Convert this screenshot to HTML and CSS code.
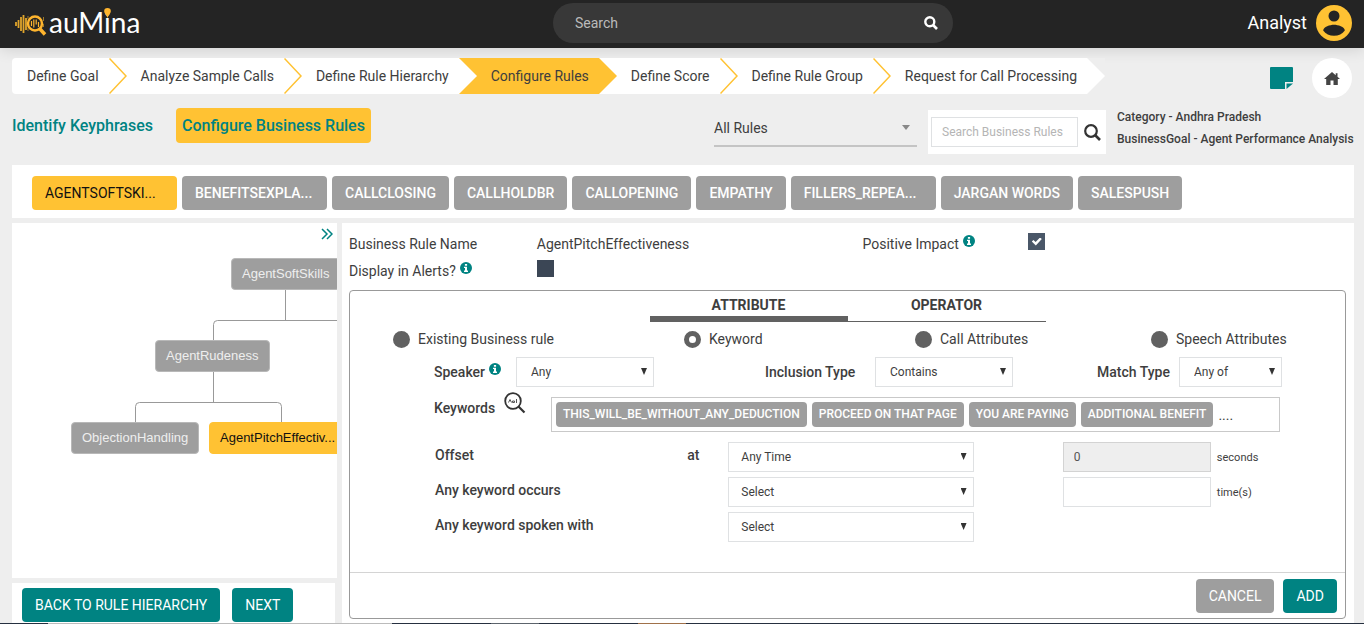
FILE: index.html
```
<!DOCTYPE html>
<html lang="en">
<head>
<meta charset="utf-8">
<title>auMina - Configure Business Rules</title>
<meta name="viewport" content="width=device-width, initial-scale=1">
<link rel="stylesheet" href="styles.css">
</head>
<body>
<svg class="sprite" aria-hidden="true">
  <symbol id="info" viewBox="0 0 12 12"><circle cx="6" cy="6" r="6"/><path d="M4.9 1.9h2.2v1.8H4.9zM4 4.7h3v3.9h1V10H4V8.600h1V6.100H4z" fill="#fff"/></symbol>
  <symbol id="chevron" viewBox="0 0 18 36"><path d="M0.500 0.500 17 18 0.500 35.500" fill="none" stroke="#ffc233" stroke-width="1.500"/></symbol>
</svg>

<header class="topbar">
  <a class="logo" href="#">
    <svg class="logo-mark" viewBox="0 0 32 26" aria-hidden="true">
      <path d="M1 11v4M3.500 9v8M6 6v14M8.500 4v18M11 7v12" stroke="#e0a52c" stroke-width="1.800" fill="none"/>
      <circle cx="20" cy="12.500" r="7" fill="none" stroke="#ffb52e" stroke-width="2.500"/>
      <path d="M25 18l5 5.500" stroke="#ffb52e" stroke-width="3.500"/>
      <path d="M16.500 10v5M18.800 8.500v8M21.200 8.500v5M23.500 11v5" stroke="#ffb52e" stroke-width="1.200"/>
      <path d="M13 5v3M28.500 6v4M28.500 13v3M13 17v3" stroke="#a07a2a" stroke-width="1"/>
    </svg>
    <span class="logo-text">auM<span class="logo-i">i<svg class="logo-dot" viewBox="0 0 6 9" aria-hidden="true"><path d="M3 0a3 3 0 0 1 3 3c0 2-2 3-3 6C2 6 0 5 0 3a3 3 0 0 1 3-3z" fill="#ffb52e"/></svg></span>na</span>
  </a>
  <form class="search" role="search">
    <input class="search-input" type="search" placeholder="Search" aria-label="Search">
    <button class="icon-button" type="button" aria-label="Search">
      <svg width="14" height="14" viewBox="0 0 14 14"><circle cx="5.800" cy="5.800" r="4.500" fill="none" stroke="#fff" stroke-width="2.400"/><path d="M9 9l4 4" stroke="#fff" stroke-width="2.600"/></svg>
    </button>
  </form>
  <a class="user" href="#">
    <span>Analyst</span>
    <svg width="36" height="36" viewBox="0 0 36 36" aria-hidden="true"><circle cx="18" cy="18" r="18" fill="#ffc233"/><circle cx="18" cy="11" r="5.500" fill="#242424"/><path d="M7.200 25.500c0-3.600 7-5.700 10.800-5.700s10.800 2.100 10.800 5.700c-2.300 3.400-6.300 5.300-10.800 5.300S9.500 28.900 7.200 25.500z" fill="#242424"/></svg>
  </a>
</header>

<main class="page">
  <div class="steps-row">
    <ol class="steps">
      <li class="step"><a href="#">Define Goal</a><svg class="edge"><use href="#chevron"/></svg></li>
      <li class="step"><a href="#">Analyze Sample Calls</a><svg class="edge"><use href="#chevron"/></svg></li>
      <li class="step"><a href="#">Define Rule Hierarchy</a><svg class="edge"><path d="M0 0h18v36H0L18 18z" fill="#ffc233"/></svg></li>
      <li class="step current"><a href="#" aria-current="step">Configure Rules</a><svg class="edge"><path d="M0 0h18v36H0z" fill="#fff"/><path d="M0 0 18 18 0 36z" fill="#ffc233"/></svg></li>
      <li class="step"><a href="#">Define Score</a><svg class="edge"><use href="#chevron"/></svg></li>
      <li class="step"><a href="#">Define Rule Group</a><svg class="edge"><use href="#chevron"/></svg></li>
      <li class="step"><a href="#">Request for Call Processing</a><svg class="edge last"><path d="M0 0 18 18 0 36z" fill="#fff"/></svg></li>
    </ol>
    <div class="shortcuts">
      <button class="icon-button" type="button" aria-label="Notes"><svg width="23" height="22" viewBox="0 0 23 22"><path d="M1 0h21a1 1 0 0 1 1 1v14h-8v7H1a1 1 0 0 1-1-1V1a1 1 0 0 1 1-1z" fill="#008382"/><path d="M16.500 16.500H23L16.500 22z" fill="#008382"/></svg></button>
      <a class="home" href="#" aria-label="Home"><svg width="16" height="13" viewBox="0 0 16 13"><path d="M8 0 0 7h2.200v6H6.500V8.500h3V13h4.300V7H16l-2.500-2.200V1.200h-1.800v2z" fill="#444"/></svg></a>
    </div>
  </div>

  <div class="toolbar">
    <nav class="views">
      <a class="view" href="#">Identify Keyphrases</a>
      <a class="view active" href="#">Configure Business Rules</a>
    </nav>
    <div class="select line-select"><select aria-label="Rule filter"><option>All Rules</option></select></div>
    <form class="rule-search">
      <input type="text" placeholder="Search Business Rules" aria-label="Search Business Rules">
      <button class="icon-button" type="button" aria-label="Search rules"><svg width="17" height="17" viewBox="0 0 17 17"><circle cx="7" cy="7" r="5.800" fill="none" stroke="#333" stroke-width="2.200"/><path d="M11 11l5 5" stroke="#333" stroke-width="2.600"/></svg></button>
    </form>
    <div class="context"><div>Category - Andhra Pradesh</div><div>BusinessGoal - Agent Performance Analysis</div></div>
  </div>

  <nav class="categories" aria-label="Categories">
    <button class="btn long selected" type="button">AGENTSOFTSKI...</button>
    <button class="btn long" type="button">BENEFITSEXPLA...</button>
    <button class="btn" type="button">CALLCLOSING</button>
    <button class="btn" type="button">CALLHOLDBR</button>
    <button class="btn" type="button">CALLOPENING</button>
    <button class="btn" type="button">EMPATHY</button>
    <button class="btn long" type="button">FILLERS_REPEA...</button>
    <button class="btn" type="button">JARGAN WORDS</button>
    <button class="btn" type="button">SALESPUSH</button>
  </nav>

  <div class="workspace">
    <div class="side">
      <section class="tree" aria-label="Rule hierarchy">
        <svg class="links" width="325" height="240" viewBox="0 0 325 240" aria-hidden="true"><path d="M273.500 66v31.500M325 97.500H205.500q-4 0-4 4V118M201.500 148v31.500M123.500 200v-16.500q0-4 4-4h138q4 0 4 4V200" fill="none" stroke="#999"/></svg>
        <button class="expand icon-button" type="button" aria-label="Expand"><svg width="12" height="12" viewBox="0 0 12 12"><path d="M1 1l5 5-5 5M6 1l5 5-5 5" fill="none" stroke="#008382" stroke-width="1.500"/></svg></button>
        <button class="node node-root" type="button">AgentSoftSkills</button>
        <button class="node node-rude" type="button">AgentRudeness</button>
        <button class="node node-objection" type="button">ObjectionHandling</button>
        <button class="node node-pitch" type="button">AgentPitchEffectiv...</button>
      </section>
      <div class="side-actions">
        <button class="btn primary" type="button">BACK TO RULE HIERARCHY</button>
        <button class="btn primary" type="button">NEXT</button>
      </div>
    </div>

    <section class="editor">
      <div class="summary">
        <span>Business Rule Name</span><span>AgentPitchEffectiveness</span>
        <label for="positive">Positive Impact <svg class="info"><use href="#info"/></svg></label>
        <input class="check" id="positive" type="checkbox" checked>
        <label for="alerts">Display in Alerts? <svg class="info"><use href="#info"/></svg></label>
        <input class="check" id="alerts" type="checkbox">
      </div>

      <form class="rule">
        <div class="tabs" role="tablist">
          <button class="tab active" type="button" role="tab" aria-selected="true">ATTRIBUTE</button>
          <button class="tab" type="button" role="tab" aria-selected="false">OPERATOR</button>
        </div>
        <div class="kinds">
          <label><input class="radio" type="radio" name="kind">Existing Business rule</label>
          <label><input class="radio" type="radio" name="kind" checked>Keyword</label>
          <label><input class="radio" type="radio" name="kind">Call Attributes</label>
          <label><input class="radio" type="radio" name="kind">Speech Attributes</label>
        </div>
        <div class="fields">
          <div class="field speaker"><label for="speaker">Speaker <svg class="info"><use href="#info"/></svg></label><div class="select"><select id="speaker"><option>Any</option></select></div></div>
          <div class="field inclusion"><label for="inclusion">Inclusion Type</label><div class="select"><select id="inclusion"><option>Contains</option></select></div></div>
          <div class="field match"><label for="match">Match Type</label><div class="select"><select id="match"><option>Any of</option></select></div></div>
        </div>
        <div class="keywords">
          <div class="keywords-label">Keywords
            <button class="icon-button" type="button" aria-label="Find keywords"><svg width="22" height="22" viewBox="0 0 22 22"><circle cx="9" cy="9" r="7.800" fill="none" stroke="#333" stroke-width="1.800"/><path d="M14.500 14.500l6 6" stroke="#333" stroke-width="2.200"/><path d="M4.500 10.500 6 7.500l1.500 3M8.500 9h2v1.500h-2zM12.500 7v4" fill="none" stroke="#555" stroke-width="1"/></svg></button>
          </div>
          <div class="chips">
            <span class="chip">THIS_WILL_BE_WITHOUT_ANY_DEDUCTION</span>
            <span class="chip">PROCEED ON THAT PAGE</span>
            <span class="chip">YOU ARE PAYING</span>
            <span class="chip">ADDITIONAL BENEFIT</span>
            <span class="more">....</span>
          </div>
        </div>
        <div class="conditions">
          <label class="name" for="offset">Offset</label><span class="at">at</span>
          <div class="select"><select id="offset"><option>Any Time</option></select></div>
          <input class="amount" id="seconds" type="text" value="0" disabled><label class="unit" for="seconds">seconds</label>
          <label class="name" for="occurs">Any keyword occurs</label>
          <div class="select"><select id="occurs"><option>Select</option></select></div>
          <input class="amount" id="times" type="text"><label class="unit" for="times">time(s)</label>
          <label class="name" for="spoken">Any keyword spoken with</label>
          <div class="select"><select id="spoken"><option>Select</option></select></div>
        </div>
        <div class="rule-actions">
          <button class="btn" type="button">CANCEL</button>
          <button class="btn primary" type="button">ADD</button>
        </div>
      </form>
    </section>
  </div>
</main>
<div class="baseline"></div>
</body>
</html>
```
FILE: styles.css
```
* { box-sizing: border-box; }

body {
  margin: 0;
  min-height: 100vh;
  display: flex;
  flex-direction: column;
  background: #eee;
  color: #3e3e3e;
  font: 14px/20px Roboto, "Liberation Sans", sans-serif;
}

button, input, select { font: inherit; color: inherit; }
button { cursor: pointer; }
a { color: inherit; text-decoration: none; }
svg { display: block; }
.sprite { position: absolute; width: 0; height: 0; }

.icon-button {
  display: flex;
  padding: 0;
  border: 0;
  background: none;
}

/* Top bar */
.topbar {
  display: grid;
  grid-template-columns: 553fr 400px 411fr;
  align-items: start;
  height: 48px;
  background: #242424;
  color: #fff;
  box-shadow: 0 2px 14px rgba(0, 0, 0, 0.12);
}
.logo { display: flex; align-items: center; padding: 4px 0 0 15px; }
.logo-mark { width: 32px; height: 26px; margin-top: 4px; }
.logo-text { margin-left: 2px; font: 28px/36px Lato, sans-serif; }
.logo-i { position: relative; }
.logo-dot { position: absolute; left: 0; top: 3px; width: 7px; height: 10px; }
.search {
  display: flex;
  align-items: center;
  height: 40px;
  margin-top: 3px;
  padding: 0 15px 0 22px;
  border-radius: 20px;
  background: #383838;
}
.search-input {
  flex: 1;
  padding: 0;
  border: 0;
  outline: 0;
  background: none;
}
.search-input::placeholder { color: #bbb; }
.user {
  display: flex;
  justify-content: flex-end;
  align-items: center;
  gap: 9px;
  padding: 5px 12px 0 0;
  font-size: 18px;
}

/* Page frame */
.page {
  flex: 1;
  display: flex;
  flex-direction: column;
  padding: 10px 10px 0 12px;
}
.steps-row { display: flex; justify-content: space-between; align-items: flex-start; }
.steps { display: flex; margin: 0; padding: 0; list-style: none; }
.step { display: flex; height: 36px; background: #fff; line-height: 36px; }
.step a { padding: 0 10px 0 14px; white-space: nowrap; }
.step:first-child { padding-left: 1px; border-radius: 4px 0 0 4px; }
.step.current { background: #ffc233; }
.edge { width: 18px; height: 36px; }
.last { background: #eee; }
.shortcuts { display: flex; align-items: center; gap: 19px; padding-right: 2px; }
.home {
  display: flex;
  align-items: center;
  justify-content: center;
  width: 40px;
  height: 40px;
  border-radius: 50%;
  background: #fff;
}

/* Toolbar */
.toolbar { display: flex; align-items: flex-start; margin-top: 10px; }
.views { flex: 1; display: flex; gap: 18px; }
.view {
  padding: 0 5px 0 0;
  border-radius: 4px;
  color: #008382;
  font-size: 16px;
  font-weight: 500;
  line-height: 35px;
}
.view.active { padding: 0 6px; background: #ffc233; }

.select { position: relative; min-width: 0; }
.select select {
  appearance: none;
  display: block;
  width: 100%;
  height: 30px;
  padding: 0 20px 0 12px;
  border: 1px solid #dfe1e3;
  border-radius: 0;
  background: #fff;
  font-size: 12px;
}
.select::after {
  content: "";
  position: absolute;
  right: 7px;
  top: 11px;
  width: 6px;
  height: 7px;
  background: #333;
  clip-path: polygon(0 0, 100% 0, 50% 100%);
  pointer-events: none;
}
.line-select { width: 203px; margin-top: 2px; }
.line-select select {
  height: 37px;
  padding-left: 0;
  border: 0;
  border-bottom: 2px solid #c4c4c4;
  background: none;
  font-size: 14px;
}
.line-select::after { top: 15px; width: 8px; height: 5px; background: #888; }

.rule-search {
  display: flex;
  align-items: center;
  gap: 6px;
  height: 44px;
  margin: 2px 11px 0;
  padding: 0 5px 0 3px;
  background: #fff;
}
.rule-search input {
  width: 147px;
  height: 30px;
  padding: 0 0 0 10px;
  border: 1px solid #dfe1e3;
  font-size: 12px;
}
.rule-search input::placeholder { color: #b5b5b5; }
.context { width: 237px; font-size: 12px; font-weight: 500; line-height: 22px; white-space: nowrap; margin-top: -2px; }

/* Buttons */
.btn {
  height: 34px;
  padding: 0 13px;
  border: 0;
  border-radius: 4px;
  background: #9e9e9e;
  color: #fff;
  white-space: nowrap;
}
.btn.long { width: 145px; text-align: left; }
.btn.primary { background: #008382; }

.categories {
  display: flex;
  gap: 5px;
  margin-top: 11px;
  padding: 11px 20px 8px;
  background: #fff;
}
.categories .btn { font-weight: 500; }
.categories .selected { background: #ffc233; color: #111; font-weight: 400; }

/* Workspace */
.workspace {
  flex: 1;
  display: grid;
  grid-template-columns: 325px minmax(0, 1fr);
  gap: 5px;
  margin-top: 5px;
}
.side { display: flex; flex-direction: column; gap: 5px; }
.tree { position: relative; flex: 1; overflow: hidden; background: #fff; }
.links { position: absolute; left: 0; top: 0; }
.expand { position: absolute; left: 309px; top: 5px; }
.node {
  position: absolute;
  height: 32px;
  padding: 0 10px;
  border: 1px solid #b8b8b8;
  border-radius: 4px;
  background: #9e9e9e;
  color: #eee;
  font: 13px/20px "Liberation Sans", sans-serif;
  white-space: nowrap;
}
.node-root { left: 219px; top: 35px; }
.node-rude { left: 143px; top: 117px; }
.node-objection { left: 59px; top: 199px; }
.node-pitch { left: 197px; top: 199px; border-color: #ffc233; background: #ffc233; color: #111; }
.side-actions {
  display: flex;
  gap: 12px;
  margin-right: 2px;
  padding: 5px 10px 1px;
  background: #fff;
}

.editor {
  display: flex;
  flex-direction: column;
  padding: 7px 8px 4px 7px;
  background: #fff;
}
.summary {
  display: grid;
  grid-template-columns: 188fr 326fr 166fr 318fr;
  align-items: center;
  grid-auto-rows: 27px;
  padding-bottom: 6px;
}
.info { display: inline-block; width: 12px; height: 12px; margin-left: 1px; fill: #008382; vertical-align: 2px; }
.check {
  appearance: none;
  width: 17px;
  height: 17px;
  margin: 0 0 4px;
  background: #3b4655;
}
.check:checked {
  background: #4a5768;
  display: grid;
  place-items: center;
}
.check:checked::before {
  content: "";
  width: 10px;
  height: 8px;
  background: #fff;
  clip-path: polygon(0 50%, 16% 30%, 38% 56%, 82% 0, 100% 20%, 40% 100%);
}

.rule {
  flex: 1;
  display: flex;
  flex-direction: column;
  border: 1px solid #999;
  border-radius: 4px;
}
.tabs { display: grid; grid-template-columns: 1fr 1fr; width: 396px; margin: 0 auto; }
.tab {
  display: flex;
  justify-content: center;
  align-items: flex-start;
  height: 31px;
  padding: 0;
  border: 0;
  border-bottom: 1px solid #616161;
  background: none;
  font-weight: 700;
  line-height: 28px;
}
.tab.active { border-bottom-width: 6px; }

.kinds {
  display: grid;
  grid-template-columns: 291fr 231fr 236fr 194fr;
  margin: 7px 0 8px 43px;
}
.kinds label { display: flex; align-items: center; gap: 8px; }
.radio {
  appearance: none;
  width: 17px;
  height: 17px;
  margin: 0;
  border-radius: 50%;
  background: #616161;
}
.radio:checked { border: 5px solid #616161; background: #fff; }

.fields {
  display: grid;
  grid-template-columns: 331fr 332fr 185fr;
  margin: 0 63px 10px 84px;
}
.field { display: grid; align-items: center; font-weight: 500; }
.field select { padding-left: 14px; font-weight: 400; }
.speaker { grid-template-columns: 82px 138px; }
.inclusion { grid-template-columns: 110px 138px; }
.match { grid-template-columns: 82px 1fr; }

.keywords {
  display: grid;
  grid-template-columns: 117px minmax(0, 1fr);
  margin: 0 65px 10px 84px;
}
.keywords-label { display: flex; gap: 9px; font-weight: 500; line-height: 22px; }
.keywords-label .icon-button { align-self: flex-start; margin-top: -5px; }
.chips {
  display: flex;
  align-items: center;
  gap: 5px;
  height: 35px;
  padding: 0 4px;
  border: 1px solid #c9c9c9;
}
.chip {
  padding: 0 7px;
  border-radius: 4px;
  background: #9e9e9e;
  color: #fff;
  font-size: 12px;
  font-weight: 500;
  line-height: 25px;
  white-space: nowrap;
}

.conditions {
  display: grid;
  grid-template-columns: 252fr 41fr 245fr 89fr 148fr 134fr;
  grid-auto-rows: 30px;
  row-gap: 5px;
  padding-left: 85px;
}
.conditions .name { grid-column: 1; font-weight: 500; line-height: 26px; }
.at { font-weight: 500; line-height: 26px; }
.conditions .select { grid-column: 3; }
.amount {
  grid-column: 5;
  min-width: 0;
  height: 30px;
  padding: 0 10px;
  border: 1px solid #dfe1e3;
  font-size: 12px;
}
.amount:disabled { border-color: #d3d3d3; background: #eee; color: #555; }
.unit { padding-left: 6px; font-size: 11px; line-height: 32px; }

.rule-actions {
  display: flex;
  justify-content: flex-end;
  gap: 9px;
  margin-top: auto;
  padding: 6px 8px 5px;
  border-top: 1px solid #d4d4d4;
}
.baseline {
  height: 1px;
  background: linear-gradient(90deg, #263040 48px, #bbb 48px 392px, #263040 392px 491px, #5c646c 491px 539px, #263040 539px 638px, #a0714a 638px 686px, #263040 686px);
}
```
